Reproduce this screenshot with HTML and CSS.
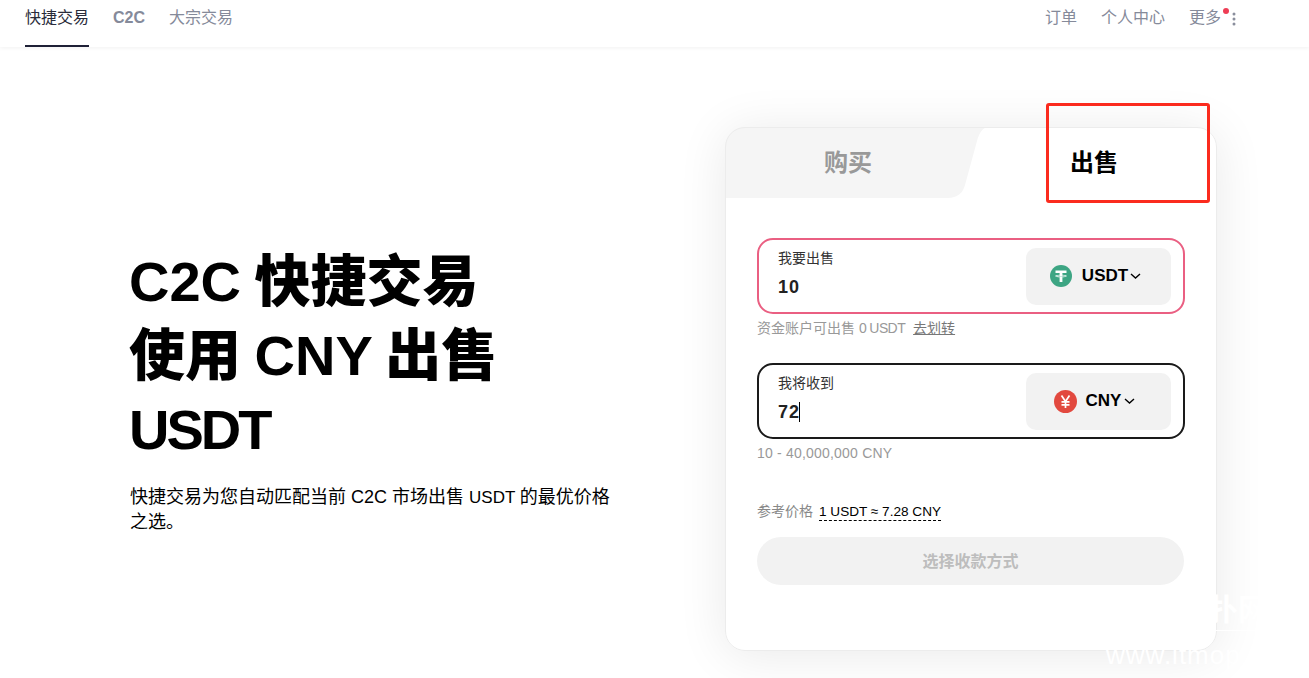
FILE: index.html
```html
<!DOCTYPE html>
<html lang="zh-CN">
<head>
<meta charset="utf-8">
<title>C2C 快捷交易</title>
<link rel="stylesheet" href="styles.css">
</head>
<body>
<header class="topbar">
  <nav class="nav">
    <a class="nav-item nav-active">快捷交易</a>
    <a class="nav-item nav-strong">C2C</a>
    <a class="nav-item">大宗交易</a>
  </nav>
  <nav class="nav">
    <a class="nav-item">订单</a>
    <a class="nav-item">个人中心</a>
    <a class="nav-item nav-more">更多<i class="red-dot"></i>
      <svg class="kebab" width="4" height="14" viewBox="0 0 4 14"><circle cx="2" cy="2" r="1.5"/><circle cx="2" cy="7" r="1.5"/><circle cx="2" cy="12" r="1.5"/></svg>
    </a>
  </nav>
</header>
<main class="main">
  <section class="intro">
    <h1 class="headline">C2C 快捷交易<br>使用 CNY 出售<br><span class="head-usdt">USDT</span></h1>
    <p class="lead">快捷交易为您自动匹配当前 C2C 市场出售 <span class="lead-usdt">USDT </span>的最优价格之选。</p>
  </section>
  <section class="card">
    <div class="tabs">
      <svg class="tab-shape" width="492" height="71" viewBox="0 0 492 71"><path d="M0 71V20A20 20 0 0 1 20 0H264C258 0 254 6 252 14L240 58C238 66 232 71 223 71Z"/></svg>
      <div class="tab tab-off">购买</div>
      <div class="tab">出售</div>
    </div>
    <div class="form">
      <div class="field field-pink">
        <div class="field-main">
          <div class="field-label">我要出售</div>
          <div class="field-value">10</div>
        </div>
        <div class="picker">
          <svg width="22" height="22" viewBox="0 0 22 22"><circle cx="11" cy="11" r="11" fill="#3da583"/><path d="M5.5 5.5H16.5V8H12.4V9.7C14.6 9.8 16.8 10.3 16.8 11S14.6 12.2 12.4 12.3V17H9.6V12.3C7.4 12.2 5.2 11.7 5.2 11S7.4 9.8 9.6 9.7V8H5.5ZM9.6 10.4C7.8 10.5 6.4 10.8 6.4 11S8.6 11.6 11 11.6 15.6 11.3 15.6 11 14.2 10.5 12.4 10.4V11.2H9.6Z" fill="#fff"/></svg>
          <span class="coin">USDT</span>
          <svg class="chev" width="11" height="6" viewBox="0 0 11 6"><path d="M1 1L5.5 5L10 1"/></svg>
        </div>
      </div>
      <div class="hint hint-first">资金账户可出售 <span class="hint-usdt">0 USDT</span><a class="hint-link">去划转</a></div>
      <div class="field field-dark">
        <div class="field-main">
          <div class="field-label">我将收到</div>
          <div class="field-value">72<i class="caret"></i></div>
        </div>
        <div class="picker picker-cny">
          <svg width="23" height="23" viewBox="0 0 23 23"><circle cx="11.5" cy="11.5" r="11.5" fill="#e2493f"/><path d="M7.5 5.5L11.5 11.5L15.5 5.5M7.5 11.8H15.5M7.5 14.8H15.5M11.5 11.5V18" fill="none" stroke="#fff" stroke-width="1.7"/></svg>
          <span class="coin">CNY</span>
          <svg class="chev" width="11" height="6" viewBox="0 0 11 6"><path d="M1 1L5.5 5L10 1"/></svg>
        </div>
      </div>
      <div class="hint hint-range">10 - 40,000,000 CNY</div>
      <div class="rate"><span class="rate-label">参考价格</span><span class="rate-value">1 USDT ≈ 7.28 CNY</span></div>
      <button class="submit" type="button">选择收款方式</button>
    </div>
  </section>
</main>
<div class="annotation"></div>
<div class="watermark"><span class="wm-cn">猫扑网</span><span class="wm-url">www.itmop.com</span></div>
</body>
</html>
```
FILE: styles.css
```css
* { box-sizing: border-box; }
html, body { margin: 0; height: 100%; }
body {
  position: relative;
  overflow: hidden;
  background: #fff;
  color: #000;
  font-family: "Liberation Sans", "Noto Sans CJK SC", sans-serif;
}
.topbar {
  height: 47px;
  display: flex;
  justify-content: space-between;
  padding: 0 88px 0 25px;
  background: #fff;
  box-shadow: 0 1px 4px rgba(0, 0, 0, .06);
}
.nav { display: flex; gap: 24px; }
.nav-item {
  height: 47px;
  line-height: 36px;
  font-size: 16px;
  color: #858a9a;
}
.nav-strong { font-weight: 700; }
.nav-active {
  color: #2a2c3a;
  border-bottom: 2px solid #1e2036;
}
.nav-more { position: relative; }
.red-dot {
  position: absolute;
  left: 34px;
  top: 8px;
  width: 6px;
  height: 6px;
  border-radius: 50%;
  background: #ee3d55;
}
.kebab {
  position: absolute;
  left: 43px;
  top: 12px;
  fill: #8a8e9c;
}
.main {
  display: flex;
  justify-content: space-between;
  align-items: center;
  padding: 80px 92px 0 129px;
}
.intro { width: 481px; }
.headline {
  margin: 0 0 18px;
  font-size: 56px;
  line-height: 74px;
  font-weight: 900;
  word-spacing: -2px;
}
.head-usdt { letter-spacing: -3px; }
.lead {
  margin: 0 0 0 1px;
  font-size: 18px;
  line-height: 24px;
}
.lead-usdt { font-size: 17px; }
.card {
  position: relative;
  width: 492px;
  height: 524px;
  background: #fff;
  border-radius: 20px;
  box-shadow: 0 4px 50px rgba(0, 0, 0, .09);
}
.card::after {
  content: "";
  position: absolute;
  inset: 0;
  border: 1px solid #ececec;
  border-radius: 20px;
  pointer-events: none;
}
.tabs {
  position: relative;
  height: 71px;
  display: grid;
  grid-template-columns: 1fr 1fr;
}
.tab-shape {
  position: absolute;
  left: 0;
  top: 0;
  fill: #f5f5f5;
}
.tab {
  position: relative;
  text-align: center;
  font-size: 24px;
  line-height: 72px;
  font-weight: 700;
}
.tab-off { color: #999; }
.form { padding: 40px 32px 0; }
.field {
  height: 76px;
  display: flex;
  justify-content: space-between;
  align-items: center;
  padding: 0 12px 0 19px;
  border: 2px solid #000;
  border-radius: 16px;
}
.field-pink { border-color: #ea5f82; }
.field-dark { border-color: #1a1a1a; }
.field-main { padding-bottom: 6px; }
.field-label {
  font-size: 14px;
  line-height: 20px;
  color: #333;
}
.field-value {
  position: relative;
  margin-top: 8px;
  font-family: "Liberation Sans", sans-serif;
  font-size: 18px;
  letter-spacing: 1px;
  line-height: 22px;
  font-weight: 700;
  color: #222;
}
.caret {
  display: inline-block;
  width: 1px;
  height: 20px;
  margin-left: -1px;
  vertical-align: -4px;
  background: #000;
}
.picker {
  width: 145px;
  height: 57px;
  display: flex;
  justify-content: center;
  align-items: center;
  gap: 10px;
  padding-right: 6px;
  border-radius: 10px;
  background: #f2f2f2;
}
.coin {
  font-size: 17px;
  font-weight: 700;
  margin-right: -8px;
}
.picker-cny { gap: 9px; padding-right: 8px; }
.picker-cny .coin { margin-right: -6px; }
.chev {
  fill: none;
  stroke: #000;
  stroke-width: 1.4;
}
.hint {
  margin: 6px 0 41px;
  font-size: 14px;
  line-height: 17px;
  color: #999;
}
.hint-first { margin-bottom: 26px; }
.hint-range { letter-spacing: .2px; }
.hint-usdt { letter-spacing: -.6px; }
.hint-link {
  margin-left: 8px;
  color: #777;
  text-decoration: underline;
}
.rate {
  display: flex;
  gap: 6px;
  line-height: 17px;
}
.rate-label {
  font-size: 14px;
  color: #888;
}
.rate-value {
  font-size: 13.6px;
  color: #000;
  border-bottom: 1px dashed #000;
}
.submit {
  display: block;
  width: 427px;
  height: 48px;
  margin-top: 16px;
  padding: 0 0 3px;
  border: 0;
  border-radius: 24px;
  background: #f2f2f2;
  color: #bdbdbd;
  font: 700 16px "Liberation Sans", "Noto Sans CJK SC", sans-serif;
}
.annotation {
  position: absolute;
  left: 1046px;
  top: 103px;
  width: 164px;
  height: 100px;
  border: 3px solid #fb2b1e;
  border-radius: 3px;
}
.watermark {
  position: absolute;
  left: 1106px;
  top: 590px;
  width: 200px;
  display: flex;
  flex-direction: column;
  align-items: flex-start;
  color: #fff;
  pointer-events: none;
}
.wm-cn {
  align-self: flex-end;
  margin-right: 38px;
  font-size: 30px;
  line-height: 40px;
  font-weight: 700;
  border-bottom: 1px solid #fff;
}
.wm-url {
  margin-top: 8px;
  font-size: 26px;
  line-height: 32px;
  letter-spacing: 1px;
  white-space: nowrap;
}
```
